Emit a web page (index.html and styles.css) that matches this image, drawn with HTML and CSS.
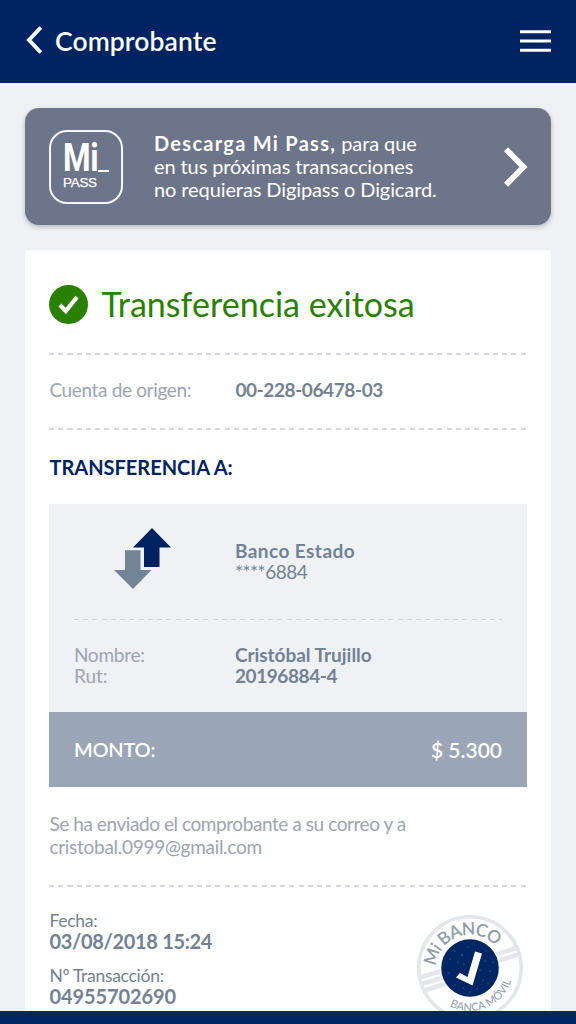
FILE: index.html
```html
<!DOCTYPE html>
<html lang="es">
<head>
<meta charset="utf-8">
<title>Comprobante</title>
<link rel="stylesheet" href="styles.css">
</head>
<body>
<div class="screen">
  <header class="topbar">
    <svg class="back" width="18" height="28" viewBox="0 0 18 28"><path d="M14.800 1.500 3 14l11.800 12.500" fill="none" stroke="#fff" stroke-width="3.900"/></svg>
    <h1 class="topbar-title">Comprobante</h1>
    <svg class="menu" width="31" height="22" viewBox="0 0 31 22"><path d="M0 1.700h31M0 10.900h31M0 20.200h31" stroke="#fff" stroke-width="3"/></svg>
  </header>

  <main class="content">
    <section class="banner">
      <div class="pass">
        <span class="pass-mi"><span class="pass-word">Mi</span><i class="pass-dash"></i></span>
        <span class="pass-label">PASS</span>
      </div>
      <p class="banner-text">
        <span class="line line-1"><b>Descarga Mi Pass,</b> para que</span>
        <span class="line line-2">en tus próximas transacciones</span>
        <span class="line line-3">no requieras Digipass o Digicard.</span>
      </p>
      <svg class="chevron" width="24" height="40" viewBox="0 0 24 40"><path d="M2 2.200 19.500 20 2 37.800" fill="none" stroke="#fff" stroke-width="5.800"/></svg>
    </section>

    <section class="receipt">
      <div class="status">
        <svg width="39" height="39" viewBox="0 0 39 39"><circle cx="19.500" cy="19.500" r="19.500" fill="#2a8003"/><path d="M11 20 16.800 26 28 12" fill="none" stroke="#fff" stroke-width="4.200"/></svg>
        <h2 class="status-title">Transferencia exitosa</h2>
      </div>
      <div class="dashes"></div>
      <div class="row origin">
        <span class="label origin-label">Cuenta de origen:</span>
        <span class="value origin-value">00-228-06478-03</span>
      </div>
      <div class="dashes"></div>
      <h3 class="section-title">TRANSFERENCIA A:</h3>

      <div class="recipient">
        <div class="row bank">
          <svg class="arrows" width="57" height="62" viewBox="0 0 57 62"><path d="M38 0 57 19.500H45.500V39H30V19.500H19z" fill="#002160"/><path d="M11 22.300h15.500V42H37.500L19 61 0 42h11z" fill="#728596"/></svg>
          <div>
            <div class="value bank-name">Banco Estado</div>
            <div class="account">****6884</div>
          </div>
        </div>
        <div class="dashes"></div>
        <div class="row person">
          <div class="label"><div class="name-label">Nombre:</div><div class="rut-label">Rut:</div></div>
          <div class="value"><div class="name-value">Cristóbal Trujillo</div><div class="rut-value">20196884-4</div></div>
        </div>
      </div>
      <div class="amount">
        <span class="amount-label">MONTO:</span>
        <span class="amount-value">$ 5.300</span>
      </div>

      <p class="notice"><span class="line notice-1">Se ha enviado el comprobante a su correo y a</span><span class="line notice-2">cristobal.0999@gmail.com</span></p>
      <div class="dashes"></div>

      <div class="details">
        <dl class="facts">
          <dt class="date-label">Fecha:</dt>
          <dd class="date-value">03/08/2018 15:24</dd>
          <dt class="number-label">Nº Transacción:</dt>
          <dd class="number-value">04955702690</dd>
        </dl>
        <svg class="seal" width="110" height="110" viewBox="-55 -55 110 110">
          <defs>
            <path id="arc-top" d="M-34 -1.500A34 34 0 0 1 34 3"/>
            <path id="arc-bottom" d="M-43 0A43 43 0 0 0 43 0"/>
            <clipPath id="ring"><circle r="51"/></clipPath>
          </defs>
          <circle r="51.200" fill="#fff" stroke="#e3e6eb" stroke-width="3.500"/>
          <g clip-path="url(#ring)" stroke="#e3e6eb" stroke-width="4.500">
            <g transform="rotate(-17)"><path d="M-55-5.500H55M-55 1.200H55M-55 8H0"/></g>
          </g>
          <circle r="30" fill="#fff"/>
          <circle r="28.800" fill="#002664"/>
          <path d="M-14 9.500 -10 5 -2.500 9 5-16.500 12-14.500 2.500 17.500z" fill="#fff"/>
          <g fill="#7188ae"><circle cx="-20" cy="-9" r=".6"/><circle cx="-15" cy="-17" r=".5"/><circle cx="-8" cy="-13" r=".7"/><circle cx="-2" cy="-21" r=".5"/><circle cx="-12" cy="-6" r=".5"/><circle cx="-21" cy="5" r=".5"/><circle cx="-6" cy="-4" r=".6"/><circle cx="15" cy="-7" r=".6"/><circle cx="20" cy="3" r=".6"/><circle cx="13" cy="12" r=".6"/><circle cx="18" cy="15" r=".5"/><circle cx="7" cy="21" r=".6"/><circle cx="-7" cy="20" r=".6"/><circle cx="-15" cy="17" r=".5"/><circle cx="16" cy="-17" r=".5"/><circle cx="23" cy="-6" r=".5"/><circle cx="10" cy="2" r=".5"/><circle cx="0" cy="24" r=".5"/></g>
          <text class="seal-top"><textPath href="#arc-top" textLength="80">Mi BANCO</textPath></text>
          <text class="seal-bottom"><textPath href="#arc-bottom" startOffset="46" textLength="76">BANCA MÓVIL</textPath></text>
        </svg>
      </div>
    </section>
  </main>
  <footer class="bottombar"></footer>
</div>
</body>
</html>
```
FILE: styles.css
```css
* { box-sizing: border-box; margin: 0; padding: 0; }
body { font-family: Lato, "Open Sans", sans-serif; background: #eff1f5; }
.screen { width: 576px; height: 1024px; display: flex; flex-direction: column; overflow: hidden; background: #eff1f5; }
.topbar { flex: none; height: 83px; padding: 0 25px 0 26px; display: flex; align-items: center; background: #002361; color: #fff; }
.back { margin: -4px 11px 0 0; }
.topbar-title { flex: 1; margin-top: -1px; font-size: 26.500px; line-height: 32px; font-weight: 600; letter-spacing: .1px; white-space: nowrap; }
.menu { margin-top: -2px; }
.content { flex: 1; min-height: 0; padding: 25px 25px 0; display: flex; flex-direction: column; overflow: hidden; }
.banner { flex: none; height: 117px; padding: 0 23px 0 24px; display: flex; align-items: center; border-radius: 14px; background: #6d758a; color: #fff; box-shadow: 0 2px 5px rgba(60, 65, 75, .32); }
.pass { width: 74px; height: 74px; padding: 12px 0 0 12px; border: 2px solid #f4f6fa; border-radius: 18px; display: flex; flex-direction: column; }
.pass-mi { display: flex; height: 28px; }
.pass-word { width: 35px; font: bold 38px/28px Roboto, sans-serif; letter-spacing: -.5px; transform: scaleX(.83); transform-origin: left; }
.pass-dash { align-self: flex-end; width: 11px; height: 2px; background: #fff; }
.pass-label { margin-top: 3px; font: 13.500px/16px "Liberation Sans", sans-serif; letter-spacing: -.3px; -webkit-text-stroke: .25px #fff; }
.banner-text { flex: 1; margin: -1px 0 0 31px; font-size: 20px; line-height: 23px; letter-spacing: -.1px; }
.banner-text b { font-weight: 700; letter-spacing: 1.280px; }
.line { display: block; white-space: nowrap; }
.chevron { margin-top: 1px; }
.receipt { flex: none; height: 761px; margin-top: 25px; padding: 0 24.500px 0 24.400px; background: #fff; }
.status { height: 103px; padding-top: 5px; display: flex; align-items: center; gap: 13px; color: #2a8003; }
.status-title { margin-top: -1px; font-size: 34px; font-weight: 400; line-height: 42px; letter-spacing: .03px; white-space: nowrap; }
.dashes { height: 1.500px; background: repeating-linear-gradient(90deg, #d3d7dd 0 5px, transparent 5px 9.250px); }
.row { display: grid; grid-template-columns: 161px 1fr; align-items: center; }
.origin { height: 73.500px; padding-bottom: 4px; font-size: 19px; white-space: nowrap; }
.label { color: #9da4b2; }
.origin-label { letter-spacing: -.35px; }
.origin-value { margin-left: 25px; letter-spacing: -.4px; }
.value { color: #728294; font-weight: 700; }
.section-title { height: 74px; padding-top: 24px; font-size: 20px; line-height: 26px; font-weight: 700; color: #002361; }
.recipient { height: 208.500px; padding: 0 24.500px; background: #eff1f5; font-size: 19px; line-height: 21px; }
.bank { height: 115px; }
.arrows { margin: -5px 0 0 40px; }
.bank-name { letter-spacing: .45px; }
.account { color: #728294; letter-spacing: -.5px; }
.person { height: 89px; }
.name-label { letter-spacing: -.25px; }
.name-value { letter-spacing: -.02px; }
.rut-value { letter-spacing: -.4px; }
.amount { height: 75px; padding: 0 24.500px; display: flex; align-items: center; justify-content: space-between; background: #9aa6b6; color: #fff; font-size: 20px; font-weight: 600; }
.amount-label { margin-top: -2px; letter-spacing: -.2px; }
.amount-value { font-size: 21px; }
.notice { height: 98px; padding-top: 25px; font-size: 19px; line-height: 23px; color: #9da4b2; }
.notice-1 { letter-spacing: -.43px; }
.notice-2 { letter-spacing: -.28px; }
.details { display: flex; justify-content: space-between; padding-top: 24px; color: #728294; }
.facts dt { font-size: 17.500px; line-height: 20px; letter-spacing: -.28px; }
.facts dd { font-size: 20px; line-height: 21px; font-weight: 700; margin-bottom: 14px; }
.date-value { letter-spacing: -.32px; }
.number-value { letter-spacing: -.08px; }
.seal { margin: 2px 2px 0 0; overflow: visible; }
.seal-top { font-size: 17.500px; font-weight: 600; fill: #909dac; }
.seal-bottom { font-size: 11px; fill: #909dac; }
.bottombar { flex: none; height: 13px; background: #002664; }
```
